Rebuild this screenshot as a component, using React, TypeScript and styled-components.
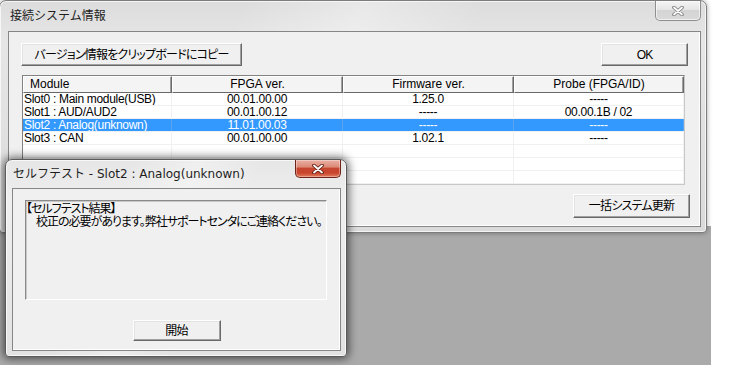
import styled, { createGlobalStyle } from "styled-components";

const GlobalStyle = createGlobalStyle`
  * { box-sizing: border-box; }
  html, body { margin: 0; padding: 0; background: #ffffff; }
  body {
    font-family: "Liberation Sans", "Noto Sans CJK JP", sans-serif;
    font-size: 12px;
    color: #000;
  }
`;

const columns = [
  { key: "module", title: "Module", width: 149 },
  { key: "fpga", title: "FPGA ver.", width: 171 },
  { key: "firmware", title: "Firmware ver.", width: 171 },
  { key: "probe", title: "Probe (FPGA/ID)", width: 170 },
];

const rows = [
  ["Slot0 : Main module(USB)", "00.01.00.00", "1.25.0", "-----"],
  ["Slot1 : AUD/AUD2", "00.01.00.12", "-----", "00.00.1B / 02"],
  ["Slot2 : Analog(unknown)", "11.01.00.03", "-----", "-----"],
  ["Slot3 : CAN", "00.01.00.00", "1.02.1", "-----"],
  ["", "", "", ""],
  ["", "", "", ""],
  ["", "", "", ""],
];

const selectedRow = 2;
const gridCols = columns.map((c) => `${c.width}px`).join(" ");

function CloseGlyph({ outline }: { outline: string }) {
  return (
    <svg width="12" height="10" viewBox="0 0 12 10">
      <path d="M2 1.5 L10 8.5 M10 1.5 L2 8.5" stroke={outline} strokeWidth="3.6" strokeLinecap="round" fill="none" />
      <path d="M2 1.5 L10 8.5 M10 1.5 L2 8.5" stroke="#ffffff" strokeWidth="1.8" strokeLinecap="round" fill="none" />
    </svg>
  );
}

export default function App() {
  return (
    <>
      <GlobalStyle />
      <Page>
        <Desktop>
          <Window $left={-1} $top={0} $width={708} $height={233} $pad="0 5px 5px 8px" $active={false}>
            <TitleBar $height={30}>
              <TitleText $height={30} $indent={2}>接続システム情報</TitleText>
              <CaptionClose $active={false} $height={20}>
                <CloseGlyph outline="#7c7c7c" />
              </CaptionClose>
            </TitleBar>
            <Client>
              <TopRow>
                <PushButton $width={221} $height={23}>バージョン情報をクリップボードにコピー</PushButton>
                <PushButton $width={87} $height={23}>OK</PushButton>
              </TopRow>
              <ListView>
                <HeaderRow>
                  {columns.map((c, i) => (
                    <HeaderCell key={c.key} $align={i === 0 ? "left" : "center"}>
                      {c.title}
                    </HeaderCell>
                  ))}
                </HeaderRow>
                {rows.map((r, ri) => (
                  <DataRow key={ri} $selected={ri === selectedRow}>
                    {r.map((v, ci) => (
                      <DataCell key={ci} $align={ci === 0 ? "left" : "center"}>
                        {v}
                      </DataCell>
                    ))}
                  </DataRow>
                ))}
              </ListView>
              <BottomRow>
                <PushButton $width={117} $height={24}>一括システム更新</PushButton>
              </BottomRow>
            </Client>
          </Window>

          <Window $left={5} $top={159} $width={342} $height={198} $pad="0 5px 5px 6px" $active>
            <TitleBar $height={28}>
              <TitleText $height={28} $indent={1}>セルフテスト - Slot2 : Analog(unknown)</TitleText>
              <CaptionClose $active $height={18}>
                <CloseGlyph outline="#5a1a10" />
              </CaptionClose>
            </TitleBar>
            <Client>
              <ResultPanel>
                <ResultLine>【セルフテスト結果】</ResultLine>
                <ResultLine $indent={10}>校正の必要があります。弊社サポートセンタにご連絡ください。</ResultLine>
              </ResultPanel>
              <CenterRow>
                <PushButton $width={88} $height={21}>開始</PushButton>
              </CenterRow>
            </Client>
          </Window>
        </Desktop>
      </Page>
    </>
  );
}

const Page = styled.div`
  width: 744px;
  height: 365px;
  background: #ffffff;
  overflow: hidden;
`;

const Desktop = styled.div`
  position: relative;
  width: 711px;
  height: 365px;
  background: linear-gradient(to bottom, #ffffff 0, #ffffff 226px, #aaaaaa 226px);
`;

const Window = styled.div<{
  $left: number;
  $top: number;
  $width: number;
  $height: number;
  $pad: string;
  $active: boolean;
}>`
  position: absolute;
  left: ${(p) => p.$left}px;
  top: ${(p) => p.$top}px;
  width: ${(p) => p.$width}px;
  height: ${(p) => p.$height}px;
  display: flex;
  flex-direction: column;
  padding: ${(p) => p.$pad};
  border: 1px solid ${(p) => (p.$active ? "#5b5b5b" : "#7d7d7d")};
  border-radius: 7px 7px 4px 4px;
  background:
    linear-gradient(115deg, rgba(255, 255, 255, 0) 30%, rgba(255, 255, 255, 0.35) 45%, rgba(255, 255, 255, 0) 60%),
    linear-gradient(to bottom, ${(p) => (p.$active ? "#e6e6e6" : "#dcdcdc")}, ${(p) => (p.$active ? "#efefef" : "#e6e6e6")} 40px, ${(p) => (p.$active ? "#e2e2e2" : "#dadada")});
  box-shadow:
    inset 0 0 0 1px rgba(255, 255, 255, 0.7),
    0 0 ${(p) => (p.$active ? "9px 2px rgba(0, 0, 0, 0.55)" : "5px rgba(0, 0, 0, 0.35)")};
`;

const TitleBar = styled.div<{ $height: number }>`
  height: ${(p) => p.$height}px;
  flex: none;
  display: flex;
  justify-content: space-between;
  align-items: flex-start;
`;

const TitleText = styled.div<{ $height: number; $indent: number }>`
  padding-left: ${(p) => p.$indent}px;
  line-height: ${(p) => p.$height + 1}px;
  font-family: "DejaVu Sans", "Noto Sans CJK JP", sans-serif;
  font-size: 12px;
  color: #1e1e1e;
  white-space: nowrap;
`;

const CaptionClose = styled.div<{ $active: boolean; $height: number }>`
  width: 46px;
  height: ${(p) => p.$height}px;
  display: flex;
  align-items: center;
  justify-content: center;
  border: 1px solid ${(p) => (p.$active ? "#6e2418" : "#8f8f8f")};
  border-top: none;
  border-radius: 0 0 5px 5px;
  background: ${(p) =>
    p.$active
      ? "linear-gradient(to bottom, #eab1a5 0%, #dd8a78 40%, #c64731 50%, #c9442c 75%, #e07a5c 100%)"
      : "linear-gradient(to bottom, #f4f4f4 0%, #e6e6e6 45%, #d4d4d4 50%, #dadada 100%)"};
  box-shadow: inset 0 0 0 1px rgba(255, 255, 255, ${(p) => (p.$active ? 0.35 : 0.6)});
`;

const Client = styled.div`
  flex: 1;
  display: flex;
  flex-direction: column;
  background: #f0f0f0;
  border: 1px solid #868686;
  box-shadow: inset -1px -1px 0 #ffffff;
`;

const TopRow = styled.div`
  display: flex;
  justify-content: space-between;
  padding: 11px 12px 0 12px;
`;

const BottomRow = styled.div`
  display: flex;
  justify-content: flex-end;
  padding: 9px 10px 0 0;
`;

const CenterRow = styled.div`
  display: flex;
  justify-content: center;
  padding-top: 20px;
`;

const PushButton = styled.div<{ $width: number; $height: number }>`
  width: ${(p) => p.$width}px;
  height: ${(p) => p.$height}px;
  display: flex;
  align-items: center;
  justify-content: center;
  background: #f0f0f0;
  border: 1px solid;
  border-color: #ffffff #696969 #696969 #ffffff;
  box-shadow: inset -1px -1px 0 #a0a0a0, inset 1px 1px 0 #e3e3e3;
  font-size: 12px;
  line-height: 12px;
  font-feature-settings: "palt";
  letter-spacing: -0.8px;
  white-space: nowrap;
`;

const ListView = styled.div`
  margin: 9px 15px 0 13px;
  height: 110px;
  background: #ffffff;
  border: 1px solid;
  border-color: #828282 #c8c8c8 #c8c8c8 #828282;
  overflow: hidden;
`;

const HeaderRow = styled.div`
  display: grid;
  grid-template-columns: ${gridCols};
  height: 17px;
`;

const HeaderCell = styled.div<{ $align: string }>`
  height: 17px;
  padding: 0 6px;
  text-align: ${(p) => p.$align};
  line-height: 15px;
  background: #f4f4f4;
  border: 1px solid;
  border-color: #ffffff #696969 #696969 #ffffff;
  box-shadow: inset -1px 0 0 #a0a0a0;
  white-space: nowrap;
`;

const DataRow = styled.div<{ $selected: boolean }>`
  display: grid;
  grid-template-columns: ${gridCols};
  height: 13px;
  border-bottom: 1px solid #f0f0f0;
  background: ${(p) => (p.$selected ? "#3399ff" : "transparent")};
  color: ${(p) => (p.$selected ? "#ffffff" : "#000000")};
`;

const DataCell = styled.div<{ $align: string }>`
  padding: 0 1px;
  text-align: ${(p) => p.$align};
  line-height: 12px;
  letter-spacing: -0.3px;
  border-right: 1px solid rgba(200, 200, 200, 0.25);
  white-space: nowrap;
  overflow: hidden;
`;

const ResultPanel = styled.div`
  margin: 11px 13px 0 12px;
  height: 100px;
  padding: 2px 0 0 0;
  border: 1px solid;
  border-color: #8a8a8a #ffffff #ffffff #8a8a8a;
  box-shadow: inset 1px 1px 0 #c8c8c8;
  font-feature-settings: "palt";
  letter-spacing: -1px;
`;

const ResultLine = styled.div<{ $indent?: number }>`
  padding-left: ${(p) => p.$indent ?? 0}px;
  font-size: 12px;
  line-height: 13px;
  white-space: nowrap;
`;
